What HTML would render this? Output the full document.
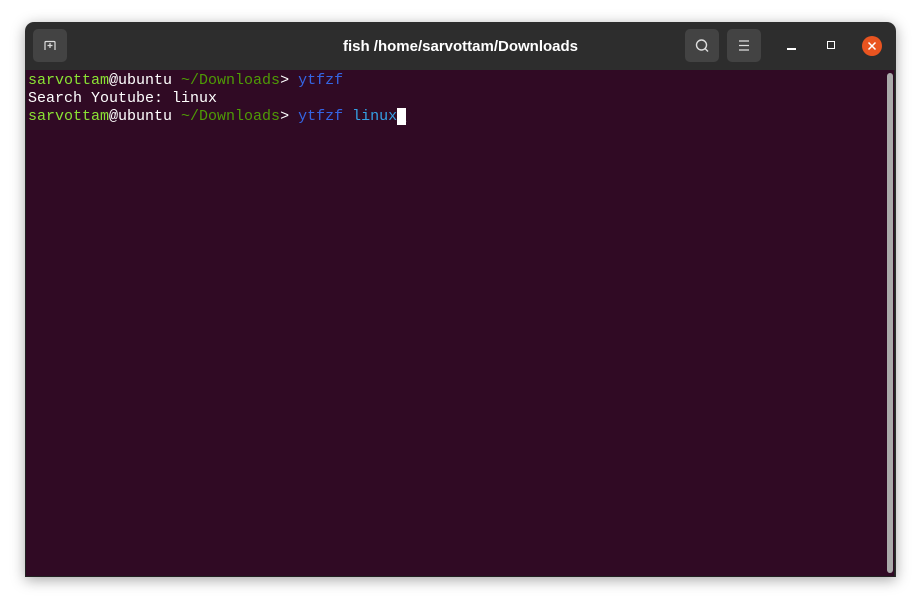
<!DOCTYPE html>
<html><head><style>
body{margin:0;width:921px;height:605px;background:#fff;overflow:hidden;position:relative;font-family:"Liberation Sans",sans-serif}
.win{position:absolute;left:25px;top:22px;width:871px;height:555px;background:#2d2d2d;border-radius:9px 9px 0 0;box-shadow:0 3px 14px rgba(0,0,0,.35);overflow:hidden}
.term{position:absolute;left:0;top:48px;width:870px;height:507px;background:#300a24;border:1px solid #222;border-top:none;box-sizing:border-box}
.btn{position:absolute;top:7px;width:34px;height:33px;background:#434343;border-radius:5px}
.title{position:absolute;left:0;right:0;top:16px;text-align:center;color:#fff;font-weight:bold;font-size:15px}
pre{margin:0;position:absolute;left:2px;top:2px;font-family:"Liberation Mono",monospace;font-size:15px;line-height:18px;color:#fff}
.g{color:#4e9a06}.lg{color:#8ae234}.b{color:#3465e4}.cb{color:#34a0e4}
.cur{background:#fff;color:#fff}
.sb{position:absolute;left:861px;top:3px;width:6px;height:500px;background:#aaa;border-radius:3px}
</style></head><body>
<div class="win">
<div class="btn" style="left:8px"><svg width="34" height="33"><path d="M12 21V13.5q0-1 1-1h8q1 0 1 1V21M17 14v5M14.5 16.5h5" stroke="#ddd" stroke-width="1.2" fill="none"/></svg></div>
<div class="title">fish /home/sarvottam/Downloads</div>
<div class="btn" style="left:660px"><svg width="34" height="33"><circle cx="16.5" cy="16" r="5" stroke="#ddd" stroke-width="1.4" fill="none"/><path d="M20 19.5l3 3" stroke="#ddd" stroke-width="1.4"/></svg></div>
<div class="btn" style="left:702px"><svg width="34" height="33"><path d="M12 12h10M12 16.5h10M12 21h10" stroke="#ddd" stroke-width="1.2"/></svg></div>
<div style="position:absolute;left:762px;top:26px;width:9px;height:1.5px;background:#fff"></div>
<div style="position:absolute;left:802px;top:19px;width:6px;height:6px;border:1.5px solid #fff"></div>
<div style="position:absolute;left:837px;top:14px;width:20px;height:20px;border-radius:50%;background:#e95420"><svg width="20" height="20"><path d="M6.5 6.5l7 7M13.5 6.5l-7 7" stroke="#fff" stroke-width="1.5"/></svg></div>
<div class="term">
<pre><span class="lg">sarvottam</span>@ubuntu <span class="g">~/Downloads</span>&gt; <span class="b">ytfzf</span>
Search Youtube: linux
<span class="lg">sarvottam</span>@ubuntu <span class="g">~/Downloads</span>&gt; <span class="b">ytfzf</span> <span class="cb">linux</span><span class="cur">_</span></pre>
<div class="sb"></div>
</div>
</div>
</body></html>
